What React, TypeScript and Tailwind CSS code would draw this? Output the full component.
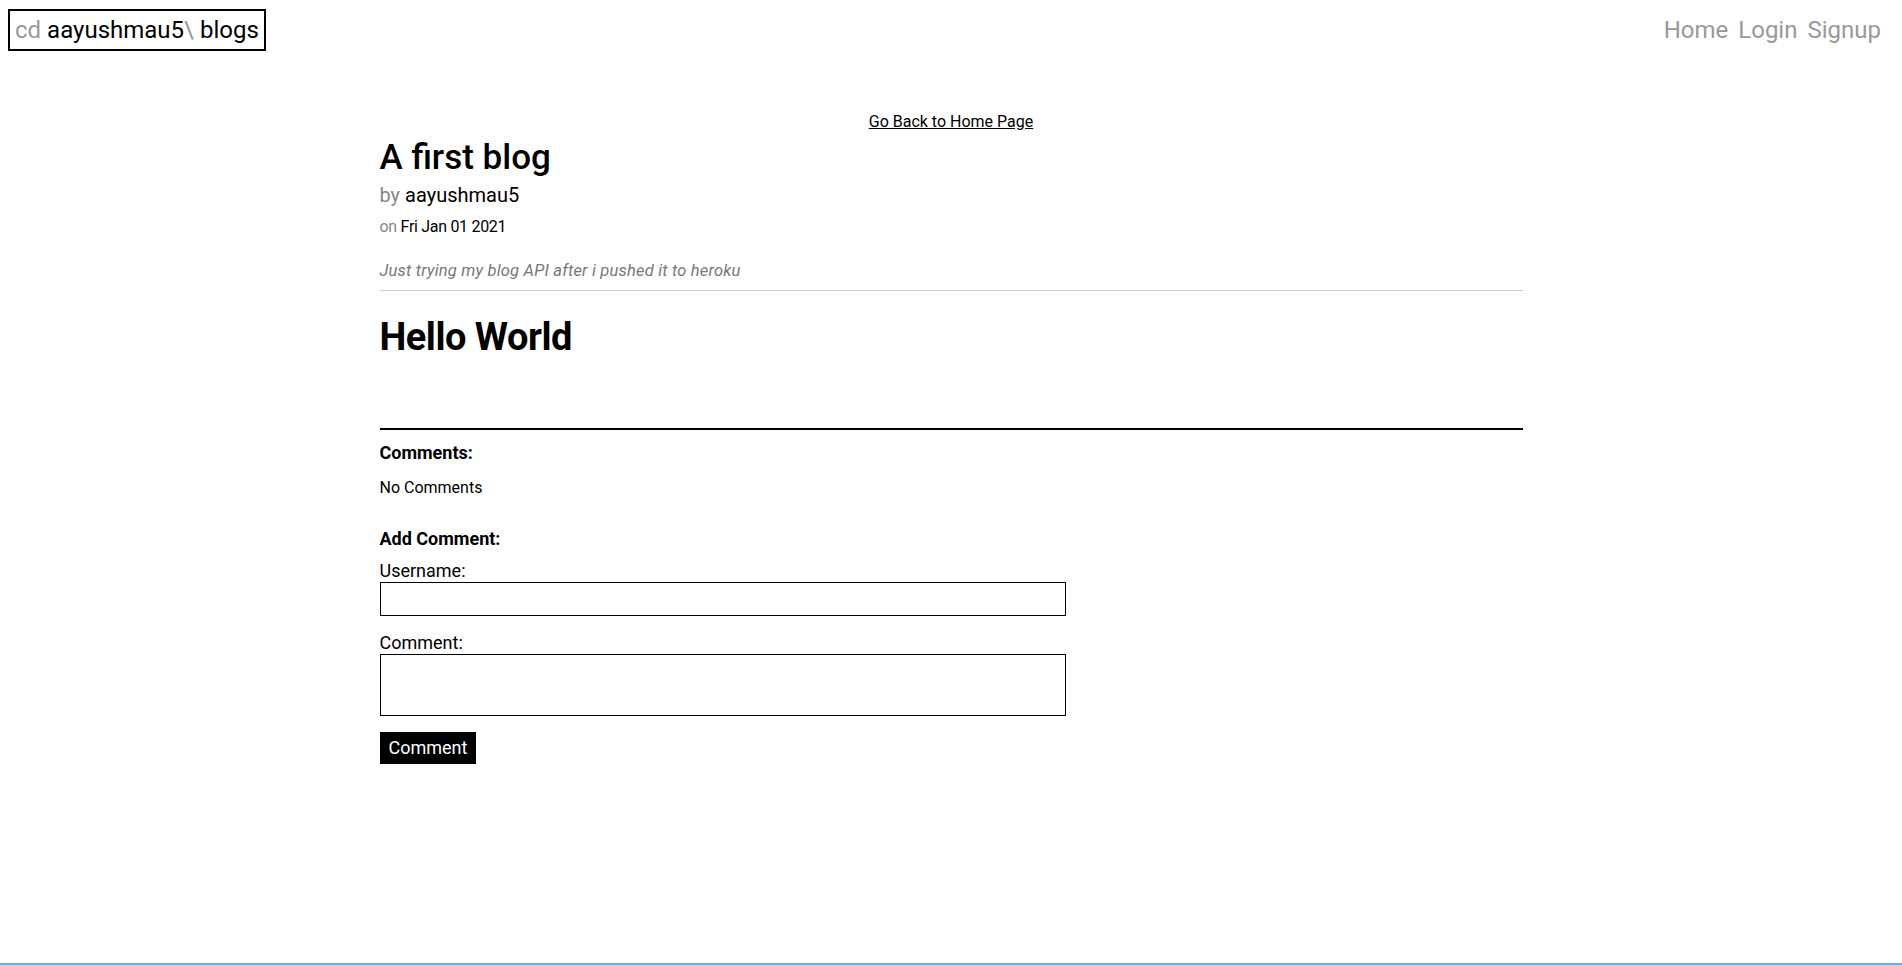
import React, { useState } from "react";

const NAV_LINKS = ["Home", "Login", "Signup"];

const App: React.FC = () => {
  const [username, setUsername] = useState("");
  const [comment, setComment] = useState("");

  return (
    <div className="min-h-[965px] flex flex-col bg-white text-black font-['Roboto','Noto_Sans',sans-serif]">
      {/* HEADER */}
      <header className="flex items-center justify-between pl-2 pr-[21px] pt-[9px]">
        <div className="h-[42px] flex items-center border-2 border-black px-[5px] text-[24px] leading-none">
          <span className="text-[#999]">cd</span>
          <span className="ml-[6px]">aayushmau5</span>
          <span className="text-[#999]">\</span>
          <span className="ml-[6px]">blogs</span>
        </div>

        <nav className="flex gap-[10px] text-[24px] leading-none text-[#999]">
          {NAV_LINKS.map((l) => (
            <a key={l} href="#" className="hover:text-black">
              {l}
            </a>
          ))}
        </nav>
      </header>

      {/* POST */}
      <main className="w-[1143px] mx-auto mt-[61px] flex flex-col">
        <a href="#" className="self-center text-[16px] leading-[20px] underline">
          Go Back to Home Page
        </a>

        <h1 className="mt-[6px] text-[35px] leading-[40px] font-medium">
          A first blog
        </h1>
        <p className="mt-[5px] text-[20px] leading-[24px]">
          <span className="text-[#888]">by</span> aayushmau5
        </p>
        <p className="mt-[10px] text-[16px] leading-[20px] tracking-[-0.3px]">
          <span className="text-[#888]">on</span> Fri Jan 01 2021
        </p>
        <p className="mt-[24px] text-[16.5px] leading-[20px] italic text-[#777] tracking-[0.2px]">
          Just trying my blog API after i pushed it to heroku
        </p>

        <div className="mt-[9px] h-px bg-[#ccc]" />

        <h2 className="mt-[22px] text-[38px] leading-[48px] font-bold tracking-[-0.5px]">
          Hello World
        </h2>

        <div className="mt-[67px] h-[2px] bg-black" />

        {/* COMMENTS */}
        <h3 className="mt-[12px] text-[18px] leading-[22px] font-bold">
          Comments:
        </h3>
        <p className="mt-[14px] text-[16px] leading-[20px]">No Comments</p>

        <h3 className="mt-[30px] text-[18px] leading-[22px] font-bold">
          Add Comment:
        </h3>

        <form
          className="flex flex-col w-[686px]"
          onSubmit={(e) => e.preventDefault()}
        >
          <label className="mt-[10px] text-[18px] leading-[22px]">
            Username:
          </label>
          <input
            value={username}
            onChange={(e) => setUsername(e.target.value)}
            className="h-[34px] border border-black px-2 outline-none"
          />

          <label className="mt-[16px] text-[18px] leading-[22px]">
            Comment:
          </label>
          <textarea
            value={comment}
            onChange={(e) => setComment(e.target.value)}
            className="h-[62px] border border-black px-2 resize-none outline-none"
          />

          <button
            type="submit"
            className="mt-[16px] self-start h-[32px] px-[9px] bg-black text-white text-[18px] leading-none"
          >
            Comment
          </button>
        </form>
      </main>

      <div className="mt-auto h-[2px] bg-[#6baed6]" />
    </div>
  );
};

export default App;
